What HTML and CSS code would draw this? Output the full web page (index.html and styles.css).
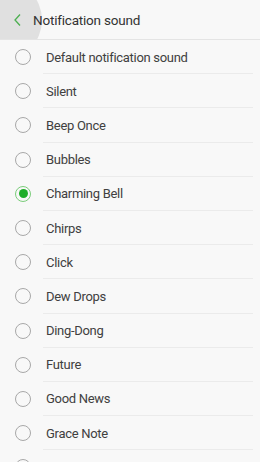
FILE: index.html
```html
<!DOCTYPE html>
<html lang="en">
<head>
  <meta charset="UTF-8">
  <meta name="viewport" content="width=device-width, initial-scale=1.0">
  <title>Notification sound</title>
  <link rel="stylesheet" href="styles.css">
</head>
<body>

  <div class="screen">
    <div class="header">
      <div class="ripple"></div>
      <svg class="back" width="10" height="14" viewBox="0 0 10 14">
        <path d="M7 1.5 L2 7 L7 12.5" fill="none" stroke="#4caf50" stroke-width="1.3"/>
      </svg>
      <div class="title">Notification sound</div>
    </div>

    <ul class="sound-list">
      <li class="sound"><span class="radio"></span><span class="name">Default notification sound</span></li>
      <li class="sound"><span class="radio"></span><span class="name">Silent</span></li>
      <li class="sound"><span class="radio"></span><span class="name">Beep Once</span></li>
      <li class="sound"><span class="radio"></span><span class="name">Bubbles</span></li>
      <li class="sound"><span class="radio checked"></span><span class="name">Charming Bell</span></li>
      <li class="sound"><span class="radio"></span><span class="name">Chirps</span></li>
      <li class="sound"><span class="radio"></span><span class="name">Click</span></li>
      <li class="sound"><span class="radio"></span><span class="name">Dew Drops</span></li>
      <li class="sound"><span class="radio"></span><span class="name">Ding-Dong</span></li>
      <li class="sound"><span class="radio"></span><span class="name">Future</span></li>
      <li class="sound"><span class="radio"></span><span class="name">Good News</span></li>
      <li class="sound"><span class="radio"></span><span class="name">Grace Note</span></li>
      <li class="sound"><span class="radio"></span></li>
    </ul>
  </div>

</body>
</html>
```

FILE: styles.css
```css
body {
  margin: 0;
  padding: 0;
  font-family: Roboto, "Noto Sans", sans-serif;
  background: #f8f8f8;
  color: #404040;
}

.screen {
  width: 260px;
  height: 462px;
  overflow: hidden;
}

/* top bar with the pressed back button */
.header {
  position: relative;
  height: 39px;
  display: flex;
  align-items: center;
  border-bottom: 1px solid #e4e4e4;
  overflow: hidden;
}

.ripple {
  position: absolute;
  left: -38px;
  top: -20px;
  width: 80px;
  height: 80px;
  border-radius: 50%;
  background: #e0e0e0;
}

.back {
  position: relative;
  margin-left: 13px;
  margin-right: 10px;
}

.title {
  position: relative;
  font-size: 13.5px;
  letter-spacing: -0.2px;
  color: #333;
}

.sound-list {
  list-style: none;
  margin: 0;
  padding: 0;
}

.sound {
  display: flex;
  align-items: center;
  height: 34.2px;
  box-sizing: border-box;
  position: relative;
}

.sound::after {
  content: "";
  position: absolute;
  left: 43px;
  right: 7px;
  bottom: 0;
  height: 1px;
  background: #ebebeb;
}

.radio {
  width: 16px;
  height: 16px;
  border: 1px solid #a8a8a8;
  border-radius: 50%;
  margin-left: 15px;
  margin-right: 15px;
  box-sizing: border-box;
  display: flex;
  align-items: center;
  justify-content: center;
}

.radio.checked {
  border-color: #7ccd7c;
}

.radio.checked::before {
  content: "";
  width: 9px;
  height: 9px;
  border-radius: 50%;
  background: #1fae2a;
}

.name {
  font-size: 13px;
  letter-spacing: -0.3px;
}
```
